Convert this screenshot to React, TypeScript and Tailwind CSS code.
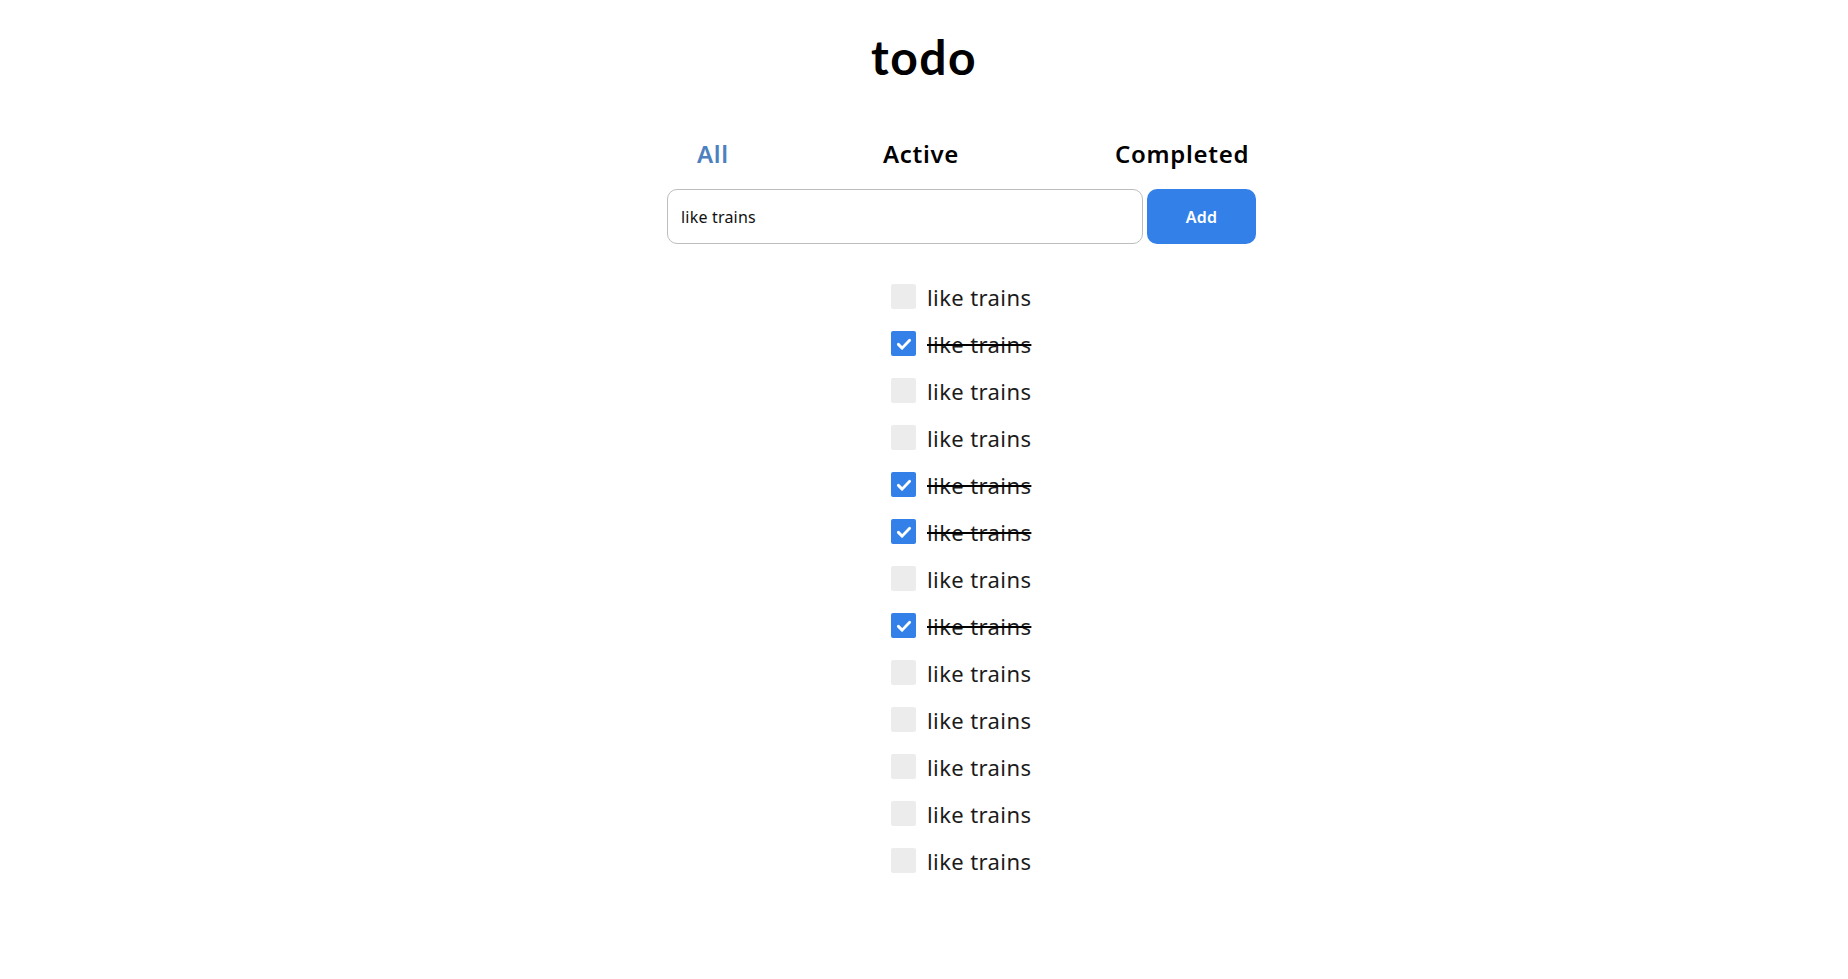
import { useState } from "react";

interface Todo {
  id: number;
  text: string;
  done: boolean;
}

const initialTodos: Todo[] = [
  false, true, false, false, true, true, false, true, false, false, false, false, false,
].map((done, i) => ({ id: i, text: "like trains", done }));

function CheckIcon() {
  return (
    <svg viewBox="0 0 24 24" className="w-[18px] h-[18px]">
      <path
        d="M4.5 12.5l5 5L19.5 7"
        fill="none"
        stroke="white"
        strokeWidth="3.8"
        strokeLinecap="round"
        strokeLinejoin="round"
      />
    </svg>
  );
}

function App() {
  const [todos, setTodos] = useState<Todo[]>(initialTodos);
  const [value, setValue] = useState("like trains");
  const [filter, setFilter] = useState("All");

  const toggle = (id: number) => {
    setTodos(todos.map((t) => (t.id === id ? { ...t, done: !t.done } : t)));
  };

  return (
    <div className="min-h-screen bg-white flex flex-col items-center font-['Noto_Sans',sans-serif] text-[#1b1b1b]">
      <h1 className="pt-[29px] text-[48px] leading-[56px] font-bold text-black font-['Lato',sans-serif] tracking-[1.5px]">
        todo
      </h1>

      <div className="w-[589px] ml-[75px]">
        <div className="mt-[53px] flex h-[32px] pl-[30px] text-[24px] leading-[32px] font-semibold tracking-[0.7px]">
          {["All", "Active", "Completed"].map((name, i) => (
            <button
              key={name}
              onClick={() => setFilter(name)}
              className={
                (i === 0 ? "w-[186px] " : i === 1 ? "w-[232px] " : "") +
                "text-left " +
                (filter === name ? "text-[#4d80be]" : "text-black")
              }
            >
              {name}
            </button>
          ))}
        </div>

        <form
          className="mt-[19px] flex gap-[4px]"
          onSubmit={(e) => {
            e.preventDefault();
            if (value.trim() === "") return;
            setTodos([...todos, { id: Date.now(), text: value, done: false }]);
          }}
        >
          <input
            value={value}
            onChange={(e) => setValue(e.target.value)}
            className="w-[476px] h-[55px] border border-[#bdbdbd] rounded-[10px] px-[13px] text-[16px] tracking-[0.2px] text-[#111] outline-none"
          />
          <button
            type="submit"
            className="w-[109px] h-[55px] rounded-[10px] bg-[#3381e8] text-white text-[16px] font-semibold tracking-[0.3px]"
          >
            Add
          </button>
        </form>

        <ul className="mt-[29px] pl-[224px]">
          {todos.map((todo) => (
            <li key={todo.id} className="h-[47px] flex items-center">
              <button
                onClick={() => toggle(todo.id)}
                className={
                  "w-[25px] h-[25px] rounded-[2px] flex items-center justify-center " +
                  (todo.done ? "bg-[#3381e8]" : "bg-[#ececec]")
                }
              >
                {todo.done && <CheckIcon />}
              </button>
              <span
                className={
                  "ml-[11px] text-[22px] leading-[30px] tracking-[0.4px] " +
                  (todo.done ? "line-through decoration-black" : "")
                }
              >
                {todo.text}
              </span>
            </li>
          ))}
        </ul>
      </div>
    </div>
  );
}

export default App;
